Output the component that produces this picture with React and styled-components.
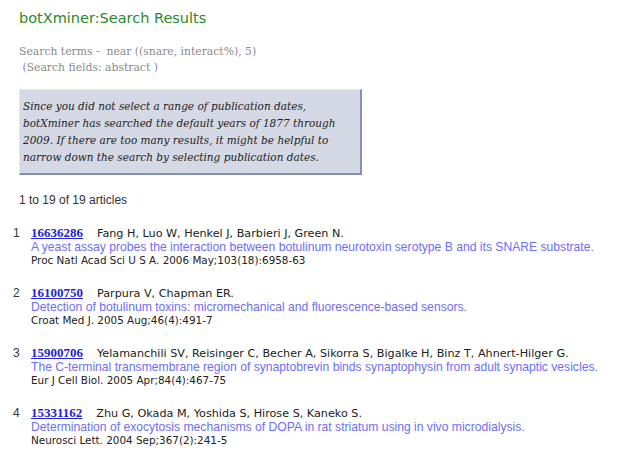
import React from "react";
import styled, { createGlobalStyle } from "styled-components";

const GlobalStyle = createGlobalStyle`
  html, body {
    margin: 0;
    padding: 0;
    background: #ffffff;
  }
`;

const Page = styled.div`
  width: 641px;
  height: 460px;
  overflow: hidden;
  padding: 10px 0 0 19px;
  box-sizing: border-box;
`;

const Title = styled.h1`
  margin: 0;
  font-family: "DejaVu Sans", Verdana, sans-serif;
  font-size: 14.5px;
  font-weight: normal;
  color: #2b8a2b;
  line-height: 16px;
`;

const Terms = styled.div`
  margin-top: 18px;
  font-family: "DejaVu Serif", Georgia, serif;
  font-size: 10.8px;
  line-height: 16px;
  color: #8a8a8a;
`;

const Notice = styled.div`
  margin-top: 13px;
  width: 343px;
  box-sizing: border-box;
  padding: 8px 4px 7px 3px;
  background: #d5d9e5;
  border-top: 1px solid #e6e8ef;
  border-left: 1px solid #e6e8ef;
  border-right: 2px solid #8591ad;
  border-bottom: 2px solid #8591ad;
  font-family: "DejaVu Serif", Georgia, serif;
  font-style: italic;
  font-size: 10.5px;
  line-height: 17px;
  color: #222;
`;

const Count = styled.div`
  margin-top: 18px;
  font-family: "Liberation Sans", Arial, sans-serif;
  font-size: 12px;
  color: #333;
`;

const List = styled.ol`
  list-style: none;
  margin: 19px 0 0 -6px;
  padding: 0;
  display: flex;
  flex-direction: column;
  gap: 19px;
`;

const Item = styled.li`
  display: grid;
  grid-template-columns: 18px auto;
  font-size: 11px;
`;

const Num = styled.span`
  font-family: "Liberation Sans", Arial, sans-serif;
  font-size: 12px;
  color: #333;
  line-height: 14px;
`;

const Body = styled.div`
  display: flex;
  flex-direction: column;
`;

const Head = styled.div`
  display: flex;
  align-items: baseline;
  gap: 14px;
  line-height: 14px;
`;

const Pmid = styled.a`
  font-family: "Liberation Serif", "Times New Roman", serif;
  font-weight: bold;
  font-size: 13px;
  color: #2323cf;
  text-decoration: underline;
`;

const Authors = styled.span`
  font-family: "DejaVu Sans", Verdana, sans-serif;
  font-size: 11.2px;
  color: #222;
`;

const ArticleTitle = styled.div`
  font-family: "Liberation Sans", Arial, sans-serif;
  font-size: 12.15px;
  color: #6e6ef5;
  line-height: 13px;
`;

const Journal = styled.div`
  font-family: "DejaVu Sans", Verdana, sans-serif;
  font-size: 10.4px;
  color: #222;
  line-height: 13px;
`;

const articles = [
  {
    id: "16636286",
    authors: "Fang H, Luo W, Henkel J, Barbieri J, Green N.",
    title:
      "A yeast assay probes the interaction between botulinum neurotoxin serotype B and its SNARE substrate.",
    journal: "Proc Natl Acad Sci U S A. 2006 May;103(18):6958-63",
  },
  {
    id: "16100750",
    authors: "Parpura V, Chapman ER.",
    title:
      "Detection of botulinum toxins: micromechanical and fluorescence-based sensors.",
    journal: "Croat Med J. 2005 Aug;46(4):491-7",
  },
  {
    id: "15900706",
    authors:
      "Yelamanchili SV, Reisinger C, Becher A, Sikorra S, Bigalke H, Binz T, Ahnert-Hilger G.",
    title:
      "The C-terminal transmembrane region of synaptobrevin binds synaptophysin from adult synaptic vesicles.",
    journal: "Eur J Cell Biol. 2005 Apr;84(4):467-75",
  },
  {
    id: "15331162",
    authors: "Zhu G, Okada M, Yoshida S, Hirose S, Kaneko S.",
    title:
      "Determination of exocytosis mechanisms of DOPA in rat striatum using in vivo microdialysis.",
    journal: "Neurosci Lett. 2004 Sep;367(2):241-5",
  },
];

const App = () => {
  return (
    <Page>
      <GlobalStyle />
      <Title>botXminer:Search Results</Title>
      <Terms>
        Search terms -&nbsp; near ((snare, interact%), 5)
        <br />
        &nbsp;(Search fields: abstract )
      </Terms>
      <Notice>
        Since you did not select a range of publication dates, botXminer has
        searched the default years of 1877 through 2009. If there are too many
        results, it might be helpful to narrow down the search by selecting
        publication dates.
      </Notice>
      <Count>1 to 19 of 19 articles</Count>
      <List>
        {articles.map((article, i) => (
          <Item key={article.id}>
            <Num>{i + 1}</Num>
            <Body>
              <Head>
                <Pmid href="#">{article.id}</Pmid>
                <Authors>{article.authors}</Authors>
              </Head>
              <ArticleTitle>{article.title}</ArticleTitle>
              <Journal>{article.journal}</Journal>
            </Body>
          </Item>
        ))}
      </List>
    </Page>
  );
};

export default App;
